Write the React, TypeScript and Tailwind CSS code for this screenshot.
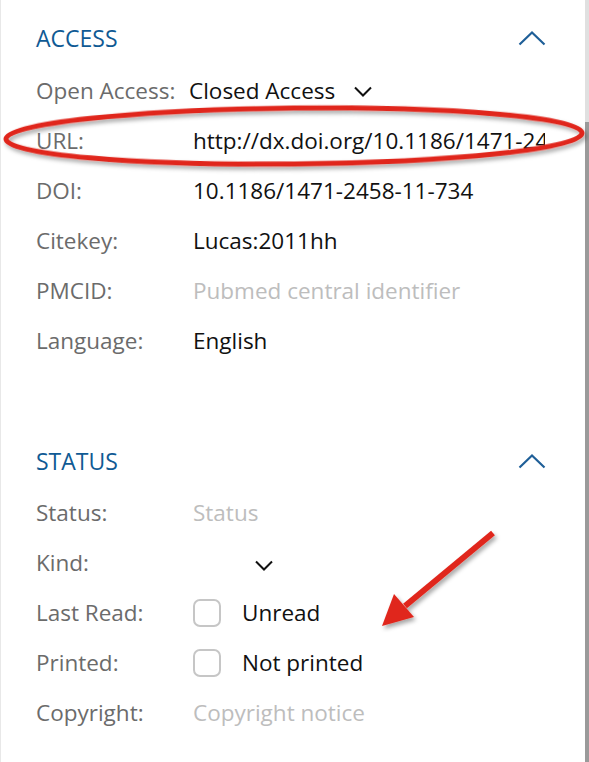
import { ReactNode } from 'react';

const font = { fontFamily: '"Open Sans", "Noto Sans", sans-serif' };

function ChevronUp() {
  return (
    <svg width="28" height="16" viewBox="0 0 28 16" className="mr-[39px] shrink-0">
      <polyline points="1.5,14.5 14,2.5 26.5,14.5" fill="none" stroke="#1f5f98" strokeWidth="2.2" />
    </svg>
  );
}

function ChevronDown() {
  return (
    <svg width="18" height="11" viewBox="0 0 18 11">
      <polyline points="1,1.5 9,9.5 17,1.5" fill="none" stroke="#111" strokeWidth="2" />
    </svg>
  );
}

function Checkbox() {
  return <div className="w-[28px] h-[28px] rounded-[7px] border-2 border-[#c6c6c6] bg-white shrink-0" />;
}

function SectionHeader({ title }: { title: string }) {
  return (
    <div className="h-[50px] flex items-center justify-between">
      <span className="text-[23px] text-[#0f5a94]">{title}</span>
      <ChevronUp />
    </div>
  );
}

function Row({ label, children }: { label: string; children: ReactNode }) {
  return (
    <div className="h-[50px] flex items-center">
      <span className="w-[157px] shrink-0 text-[22.5px] text-[#6b6b6b]">{label}</span>
      <div className="flex-1 min-w-0 mr-[40px] text-[22.5px] text-[#111] whitespace-nowrap overflow-hidden">{children}</div>
    </div>
  );
}

const Placeholder = ({ text }: { text: string }) => <span className="text-[#bdbdbd]">{text}</span>;

export default function App() {
  return (
    <div className="relative w-[589px] h-[762px] bg-white overflow-hidden flex" style={font}>
      <div className="w-px shrink-0 bg-[#e8e8e8]" />
      <div className="flex-1 min-w-0 pl-[35px] pt-[13px]">
        <SectionHeader title="ACCESS" />
        <div className="mt-[3px]">
          <div className="h-[50px] flex items-center">
            <span className="w-[153px] shrink-0 text-[22.5px] text-[#6b6b6b]">Open Access:</span>
            <span className="text-[22.5px] text-[#111]">Closed Access</span>
            <span className="ml-[19px] mt-[1px]"><ChevronDown /></span>
          </div>
          <Row label="URL:">http://dx.doi.org/10.1186/1471-2458-11-734</Row>
          <Row label="DOI:">10.1186/1471-2458-11-734</Row>
          <Row label="Citekey:">Lucas:2011hh</Row>
          <Row label="PMCID:"><Placeholder text="Pubmed central identifier" /></Row>
          <Row label="Language:">English</Row>
        </div>

        <div className="mt-[70px]">
          <SectionHeader title="STATUS" />
        </div>
        <div className="mt-[2px]">
          <Row label="Status:"><Placeholder text="Status" /></Row>
          <Row label="Kind:">
            <span className="inline-block ml-[62px] mt-[4px]"><ChevronDown /></span>
          </Row>
          <Row label="Last Read:">
            <div className="flex items-center gap-[21px]"><Checkbox /><span>Unread</span></div>
          </Row>
          <Row label="Printed:">
            <div className="flex items-center gap-[21px]"><Checkbox /><span>Not printed</span></div>
          </Row>
          <Row label="Copyright:"><Placeholder text="Copyright notice" /></Row>
        </div>
      </div>

      <div className="w-[4px] shrink-0 flex flex-col bg-[#e0e0e0]">
        <div className="h-[122px]" />
        <div className="flex-1 bg-[#9a9a9a]" />
      </div>

      {/* annotations */}
      <svg className="absolute inset-0 pointer-events-none" width="589" height="762" viewBox="0 0 589 762">
        <defs>
          <filter id="sh" x="-10%" y="-30%" width="120%" height="160%">
            <feDropShadow dx="2" dy="3" stdDeviation="2" floodColor="#000" floodOpacity="0.35" />
          </filter>
        </defs>
        <ellipse cx="294" cy="136" rx="288" ry="28" fill="none" stroke="#e0281e" strokeWidth="5" transform="rotate(-0.6 294 136)" filter="url(#sh)" />
        <g filter="url(#sh)">
          <line x1="493" y1="533" x2="405" y2="606" stroke="#e0281e" strokeWidth="6" />
          <polygon points="382,626 394,594 414,617" fill="#e0281e" />
        </g>
      </svg>
    </div>
  );
}
